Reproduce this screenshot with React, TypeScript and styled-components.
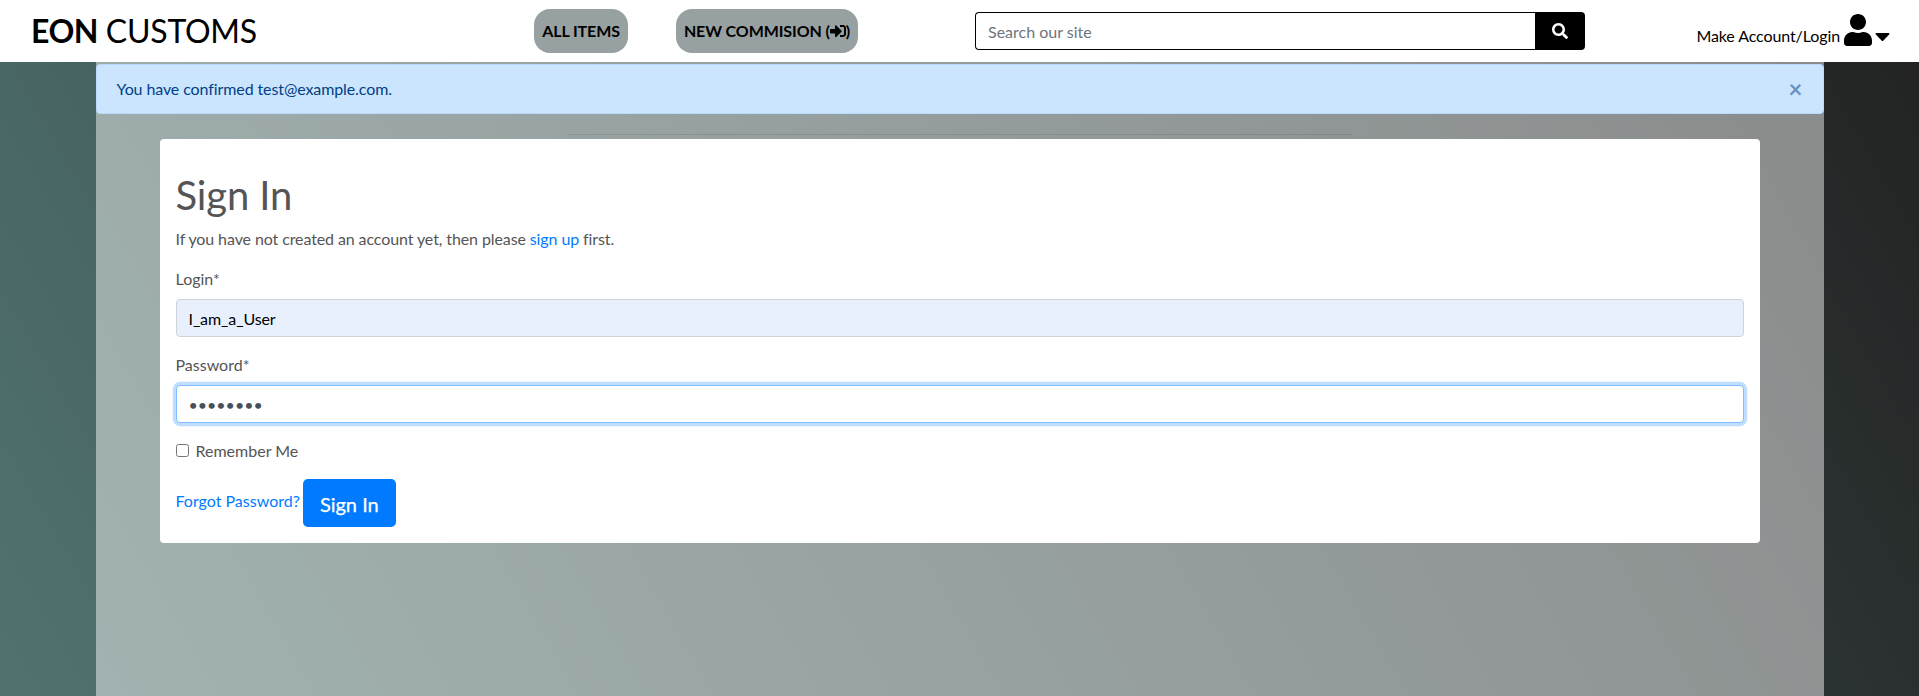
import React from "react";
import styled, { createGlobalStyle } from "styled-components";
import { FaSearch, FaUser, FaSignInAlt, FaCaretDown } from "react-icons/fa";

const GlobalStyle = createGlobalStyle`
  *, *::before, *::after { box-sizing: border-box; }
  html, body, #root { height: 100%; }
  body {
    margin: 0;
    overflow: hidden;
    font: 400 16px/24px Lato, sans-serif;
    color: #555;
    background: linear-gradient(60deg, #507370, #222);
  }
  a { color: #007bff; text-decoration: none; }
`;

const Page = styled.div`
  height: 100vh;
  display: flex;
  flex-direction: column;
`;

const Header = styled.header`
  flex: none;
  height: 62px;
  background: #fff;
  color: #000;
  display: flex;
  align-items: flex-start;
`;

const Brand = styled.h2`
  margin: 12px 0 0;
  padding-left: 31px;
  width: 534px;
  font-size: 32px;
  line-height: 38px;
  font-weight: 400;
  letter-spacing: -0.25px;
  white-space: nowrap;
  strong { letter-spacing: -0.5px; }
`;

const Nav = styled.nav`
  display: flex;
  gap: 48px;
  width: 441px;
  margin-top: 9px;
`;

const NavPill = styled.button<{ $width: number }>`
  width: ${(p) => p.$width}px;
  height: 44px;
  padding: 0;
  border: 0;
  border-radius: 16px;
  background: #98a1a1;
  color: #000;
  font: 700 16px/24px Lato, sans-serif;
  letter-spacing: -0.1px;
  white-space: nowrap;
  svg { vertical-align: -2px; }
`;

const SearchForm = styled.form`
  display: flex;
  width: 610px;
  height: 38px;
  margin-top: 12px;
`;

const SearchInput = styled.input`
  flex: 1;
  min-width: 0;
  padding: 7px 12px 5px;
  border: 1px solid #000;
  border-right: 0;
  border-radius: 4px 0 0 4px;
  font: 400 16px/24px Lato, sans-serif;
  outline: 0;
  &::placeholder { color: #6c757d; opacity: 1; }
`;

const SearchButton = styled.button`
  width: 50px;
  padding: 0;
  border: 0;
  border-radius: 0 4px 4px 0;
  background: #000;
  color: #fff;
  display: flex;
  align-items: center;
  justify-content: center;
`;

const Account = styled.a`
  && { color: #000; }
  display: flex;
  margin: 14px 29px 0 auto;
`;

const AccountLabel = styled.span`
  margin: 10px 4px 0 0;
  letter-spacing: -0.1px;
`;

const UserIcon = styled(FaUser)`
  width: 28px;
  height: 32px;
`;

const CaretIcon = styled(FaCaretDown)`
  width: 15px;
  height: 24px;
  margin: 10px 0 0 3px;
`;

const Container = styled.main`
  flex: 1;
  width: 1728px;
  margin: 0 auto;
  padding-top: 2px;
  background: rgba(255, 255, 255, 0.47);
`;

const Alert = styled.div`
  display: flex;
  justify-content: space-between;
  height: 50px;
  padding: 12px 19px 12px 20px;
  border: 1px solid #b8daff;
  border-radius: 4px;
  background: #cce5ff;
  color: #004085;
  letter-spacing: -0.1px;
`;

const CloseButton = styled.button`
  width: 16px;
  padding: 0;
  border: 0;
  background: none;
  color: #004085;
  opacity: 0.5;
  font: 700 24px/24px Lato, sans-serif;
`;

const Rule = styled.hr`
  width: 785px;
  margin: 20px auto 4px;
  border: 0;
  border-top: 1px solid rgba(0, 0, 0, 0.1);
`;

const Card = styled.section`
  width: 1600px;
  height: 404px;
  margin: 0 auto;
  padding: 32px 16px 16px;
  border-radius: 4px;
  background: #fff;
`;

const Title = styled.h1`
  margin: 0 0 8px;
  font-size: 40px;
  line-height: 48px;
  font-weight: 400;
  letter-spacing: -0.15px;
`;

const Intro = styled.p`
  margin: 0 0 16px;
  letter-spacing: -0.105px;
`;

const Field = styled.div`
  margin-bottom: 16px;
`;

const Label = styled.label`
  display: block;
  margin-bottom: 8px;
`;

const TextInput = styled.input<{ $filled?: boolean; $active?: boolean }>`
  display: block;
  width: 100%;
  height: 38px;
  padding: 6px 12px;
  border: 1px solid ${(p) => (p.$active ? "#80bdff" : "#ced4da")};
  border-radius: 4px;
  background: ${(p) => (p.$filled ? "#e8f0fe" : "#fff")};
  color: ${(p) => (p.$filled ? "#000" : "#495057")};
  box-shadow: ${(p) => (p.$active ? "0 0 0 3.2px rgba(0, 123, 255, 0.25)" : "none")};
  font: 400 16px/24px Lato, sans-serif;
  letter-spacing: ${(p) => (p.$filled ? "-0.1px" : "normal")};
  outline: 0;
`;

const CheckRow = styled.label`
  display: flex;
  height: 24px;
  margin-bottom: 16px;
  input { width: 13px; height: 13px; margin: 5px 7px 0 0; }
`;

const Actions = styled.div`
  display: flex;
  gap: 3px;
  a { margin-top: 10px; }
`;

const SubmitButton = styled.button`
  width: 93px;
  height: 48px;
  padding: 2px 0 0;
  border: 0;
  border-radius: 5px;
  background: #007bff;
  color: #fff;
  font: 400 20px/30px Lato, sans-serif;
  -webkit-text-stroke: 0.25px #fff;
`;

export default function App() {
  return (
    <Page>
      <GlobalStyle />
      <Header>
        <Brand><strong>EON</strong> CUSTOMS</Brand>
        <Nav>
          <NavPill $width={94}>ALL ITEMS</NavPill>
          <NavPill $width={182}>NEW COMMISION (<FaSignInAlt />)</NavPill>
        </Nav>
        <SearchForm>
          <SearchInput placeholder="Search our site" />
          <SearchButton type="button" aria-label="Search"><FaSearch size={16} /></SearchButton>
        </SearchForm>
        <Account href="#">
          <AccountLabel>Make Account/Login</AccountLabel>
          <UserIcon />
          <CaretIcon />
        </Account>
      </Header>
      <Container>
        <Alert>
          <span>You have confirmed test@example.com.</span>
          <CloseButton aria-label="Close">×</CloseButton>
        </Alert>
        <Rule />
        <Card>
          <Title>Sign In</Title>
          <Intro>If you have not created an account yet, then please <a href="#">sign up</a> first.</Intro>
          <Field>
            <Label htmlFor="login">Login*</Label>
            <TextInput id="login" $filled defaultValue="I_am_a_User" />
          </Field>
          <Field>
            <Label htmlFor="password">Password*</Label>
            <TextInput id="password" type="password" $active defaultValue="password" />
          </Field>
          <CheckRow><input type="checkbox" />Remember Me</CheckRow>
          <Actions>
            <a href="#">Forgot Password?</a>
            <SubmitButton>Sign In</SubmitButton>
          </Actions>
        </Card>
      </Container>
    </Page>
  );
}
